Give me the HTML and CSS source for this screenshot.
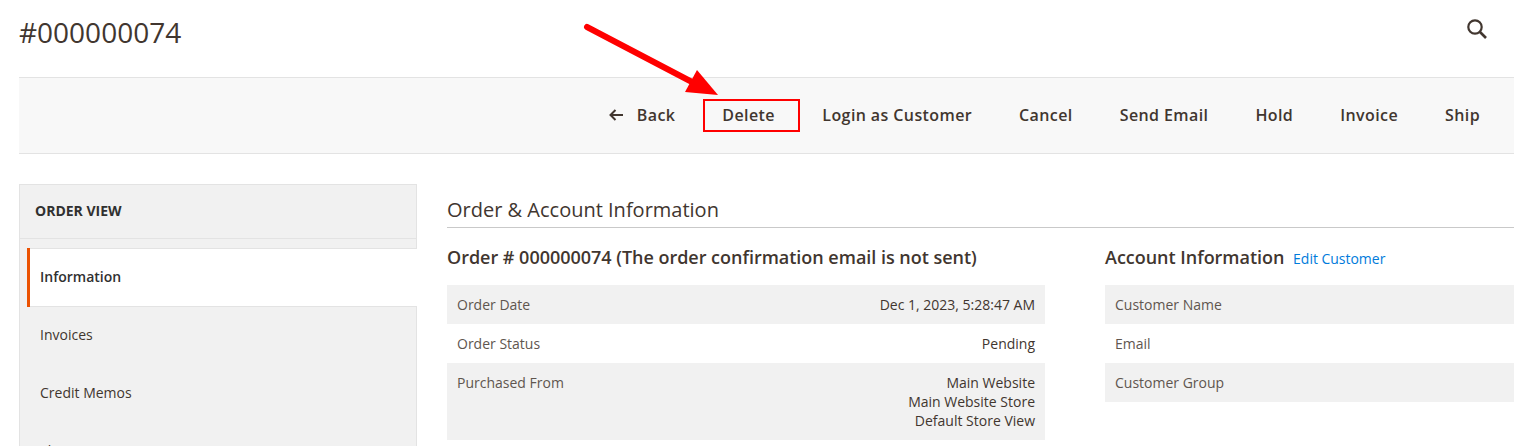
FILE: index.html
```html
<!DOCTYPE html>
<html lang="en">
<head>
  <meta charset="UTF-8" />
  <title>#000000074 / Orders</title>
  <link rel="stylesheet" href="styles.css">
</head>
<body>
  <div class="page">
    <header class="page-header">
      <h1 class="page-title">#000000074</h1>
      <svg class="search-icon" width="24" height="24" viewBox="0 0 24 24">
        <circle cx="10" cy="10" r="6.7" fill="none" stroke="#41362f" stroke-width="2.2" />
        <path d="M15 15l6 6" fill="none" stroke="#41362f" stroke-width="2.6" />
      </svg>
    </header>

    <div class="actions">
      <a class="action action-back">
        <svg class="back-icon" width="14" height="12" viewBox="0 0 14 12">
          <path d="M14 6H2M6.500 1L1.500 6l5 5" fill="none" stroke="#41362f" stroke-width="2" />
        </svg>
        Back
      </a>
      <a class="action action-delete">Delete</a>
      <a class="action">Login as Customer</a>
      <a class="action">Cancel</a>
      <a class="action">Send Email</a>
      <a class="action">Hold</a>
      <a class="action">Invoice</a>
      <a class="action">Ship</a>
    </div>

    <div class="columns">
      <aside class="sidebar">
        <div class="sidebar-title">ORDER VIEW</div>
        <div class="sidebar-gap"></div>
        <ul class="tabs">
          <li class="tab tab-active">Information</li>
          <li class="tab">Invoices</li>
          <li class="tab">Credit Memos</li>
          <li class="tab">Shipments</li>
        </ul>
      </aside>

      <main class="content">
        <h2 class="section-title">Order &amp; Account Information</h2>
        <div class="info-columns">
          <section class="info-order">
            <h3 class="info-title">Order # 000000074 (The order confirmation email is not sent)</h3>
            <table class="info-table">
              <tr><th>Order Date</th><td>Dec 1, 2023, 5:28:47 AM</td></tr>
              <tr><th>Order Status</th><td>Pending</td></tr>
              <tr><th>Purchased From</th><td>Main Website<br>Main Website Store<br>Default Store View</td></tr>
            </table>
          </section>
          <section class="info-account">
            <h3 class="info-title">Account Information <a class="edit-link">Edit Customer</a></h3>
            <table class="info-table">
              <tr><th>Customer Name</th><td></td></tr>
              <tr><th>Email</th><td></td></tr>
              <tr><th>Customer Group</th><td></td></tr>
            </table>
          </section>
        </div>
      </main>
    </div>
  </div>

  <!-- annotation over the screenshot -->
  <svg class="arrow" width="150" height="90" viewBox="0 0 150 90">
    <path d="M7 7L112 62" fill="none" stroke="#ff0000" stroke-width="6" stroke-linecap="round" />
    <path d="M117 50L105 72L138 75Z" fill="#ff0000" />
  </svg>
</body>
</html>
```

FILE: styles.css
```css
html, body {
  margin: 0;
  height: 446px;
  overflow: hidden;
  background-color: #fff;
}

body {
  font-family: "Open Sans", sans-serif;
  color: #41362f;
  font-size: 14px;
  position: relative;
}

.page {
  padding-left: 19px;
}

.page-header {
  height: 77px;
  display: flex;
  justify-content: space-between;
  align-items: flex-start;
}

.page-title {
  margin: 12px 0 0;
  font-size: 28px;
  font-weight: 400;
  line-height: 40px;
}

.search-icon {
  margin: 17px 25px 0 0;
}

.actions {
  height: 75px;
  box-sizing: content-box;
  background-color: #f8f8f8;
  border-top: 1px solid #e3e3e3;
  border-bottom: 1px solid #e3e3e3;
  display: flex;
  justify-content: flex-end;
  align-items: flex-start;
  padding-right: 34px;
  gap: 47px;
  font-size: 16px;
  font-weight: 600;
  letter-spacing: 0.4px;
  line-height: 22px;
}

.action {
  white-space: nowrap;
  margin-top: 26px;
}

.back-icon {
  margin-right: 9px;
}

.action-delete {
  border: 2px solid #f00;
  box-sizing: border-box;
  width: 97px;
  height: 33px;
  line-height: 29px;
  padding-left: 17px;
  margin: 21px -25px 0 -19px;
}

.columns {
  display: flex;
  margin-top: 30px;
}

.sidebar {
  width: 398px;
  flex-shrink: 0;
  margin-right: 30px;
}

.sidebar-title {
  height: 53px;
  line-height: 51px;
  padding-left: 15px;
  background-color: #f1f1f1;
  border: 1px solid #e3e3e3;
  font-size: 14px;
  font-weight: 700;
  color: #303030;
}

.sidebar-gap {
  height: 9px;
  background-color: #f1f1f1;
  border: 1px solid #e3e3e3;
  border-top: 0;
}

.tabs {
  list-style: none;
  margin: 0;
  padding: 0;
  background-color: #f1f1f1;
  border-left: 1px solid #e3e3e3;
  border-right: 1px solid #e3e3e3;
}

.tab {
  height: 58px;
  line-height: 56px;
  padding-left: 20px;
  color: #41362f;
}

.tab-active {
  height: 59px;
  line-height: 58px;
  background-color: #fff;
  margin: -1px -1px 0 7px;
  padding-left: 13px;
  box-shadow: inset 3px 0 0 #eb5202, inset 0 1px 0 #e3e3e3, inset 0 -1px 0 #e3e3e3;
  font-weight: 600;
  color: #303030;
}

.content {
  flex: 1;
  min-width: 0;
}

.section-title {
  margin: 0;
  height: 43px;
  line-height: 52px;
  font-size: 20px;
  font-weight: 400;
  border-bottom: 1px solid #c9c9c9;
}

.info-columns {
  display: flex;
  gap: 60px;
}

.info-order {
  width: 598px;
}

.info-account {
  flex: 1;
}

.info-title {
  margin: 0;
  height: 57px;
  line-height: 59px;
  font-size: 18px;
  font-weight: 600;
  letter-spacing: -0.02px;
}

.edit-link {
  font-size: 14px;
  font-weight: 400;
  color: #007bdb;
  margin-left: 4px;
}

.info-table {
  width: 100%;
  border-collapse: collapse;
}

.info-table tr:nth-child(odd) {
  background-color: #f1f1f1;
}

.info-table th, .info-table td {
  padding: 10px;
  line-height: 19px;
  vertical-align: top;
}

.info-table th {
  font-weight: 400;
  text-align: left;
  color: #5f564f;
}

.info-table td {
  text-align: right;
}

.arrow {
  position: absolute;
  left: 580px;
  top: 20px;
}
```
